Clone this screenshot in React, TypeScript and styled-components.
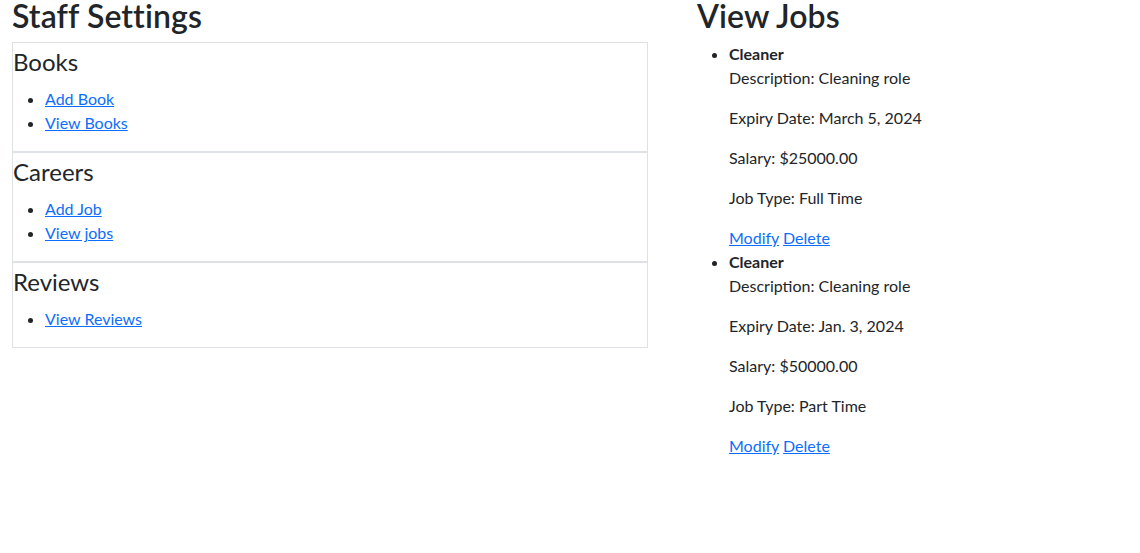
import styled, { createGlobalStyle } from "styled-components";

const GlobalStyle = createGlobalStyle`
  body {
    margin: 0;
    font-family: Lato, "Noto Sans", sans-serif;
    font-size: 16px;
    line-height: 1.5;
    color: #212529;
    background: #fff;
  }
  a {
    color: #0d6efd;
    text-decoration: underline;
  }
`;

type Section = { title: string; links: string[] };
type Job = {
  title: string;
  description: string;
  expiry: string;
  salary: string;
  type: string;
};

const sections: Section[] = [
  { title: "Books", links: ["Add Book", "View Books"] },
  { title: "Careers", links: ["Add Job", "View jobs"] },
  { title: "Reviews", links: ["View Reviews"] },
];

const jobs: Job[] = [
  {
    title: "Cleaner",
    description: "Cleaning role",
    expiry: "March 5, 2024",
    salary: "$25000.00",
    type: "Full Time",
  },
  {
    title: "Cleaner",
    description: "Cleaning role",
    expiry: "Jan. 3, 2024",
    salary: "$50000.00",
    type: "Part Time",
  },
];

function App() {
  return (
    <>
      <GlobalStyle />
      <StyledPage>
        <StyledSettings>
          <StyledTitle>Staff Settings</StyledTitle>
          {sections.map((s) => (
            <StyledBox key={s.title}>
              <StyledBoxTitle>{s.title}</StyledBoxTitle>
              <StyledList>
                {s.links.map((l) => (
                  <li key={l}>
                    <a href="#">{l}</a>
                  </li>
                ))}
              </StyledList>
            </StyledBox>
          ))}
        </StyledSettings>

        <StyledJobs>
          <StyledTitle>View Jobs</StyledTitle>
          <StyledJobList>
            {jobs.map((j, i) => (
              <li key={i}>
                <strong>{j.title}</strong>
                <p>Description: {j.description}</p>
                <p>Expiry Date: {j.expiry}</p>
                <p>Salary: {j.salary}</p>
                <p>Job Type: {j.type}</p>
                <div>
                  <a href="#">Modify</a> <a href="#">Delete</a>
                </div>
              </li>
            ))}
          </StyledJobList>
        </StyledJobs>
      </StyledPage>
    </>
  );
}

const StyledPage = styled.div`
  display: flex;
  flex-direction: row;
  gap: 49px;
  padding: 0 12px;
`;

const StyledSettings = styled.div`
  width: 636px;
  display: flex;
  flex-direction: column;
`;

const StyledJobs = styled.div`
  flex: 1;
`;

const StyledTitle = styled.h2`
  margin: 0 0 10px;
  font-size: 32px;
  line-height: 32px;
  font-weight: 600;
  letter-spacing: 0.1px;
`;

const StyledBox = styled.div`
  border: 1px solid #dee2e6;
`;

const StyledBoxTitle = styled.h4`
  margin: 4px 0 11px;
  font-size: 24px;
  line-height: 29px;
  font-weight: 400;
`;

const StyledList = styled.ul`
  margin: 0 0 16px;
  padding-left: 32px;
`;

const StyledJobList = styled.ul`
  margin: 0;
  padding-left: 32px;

  strong {
    font-weight: 700;
  }

  p {
    margin: 0 0 16px;
  }
`;

export default App;
